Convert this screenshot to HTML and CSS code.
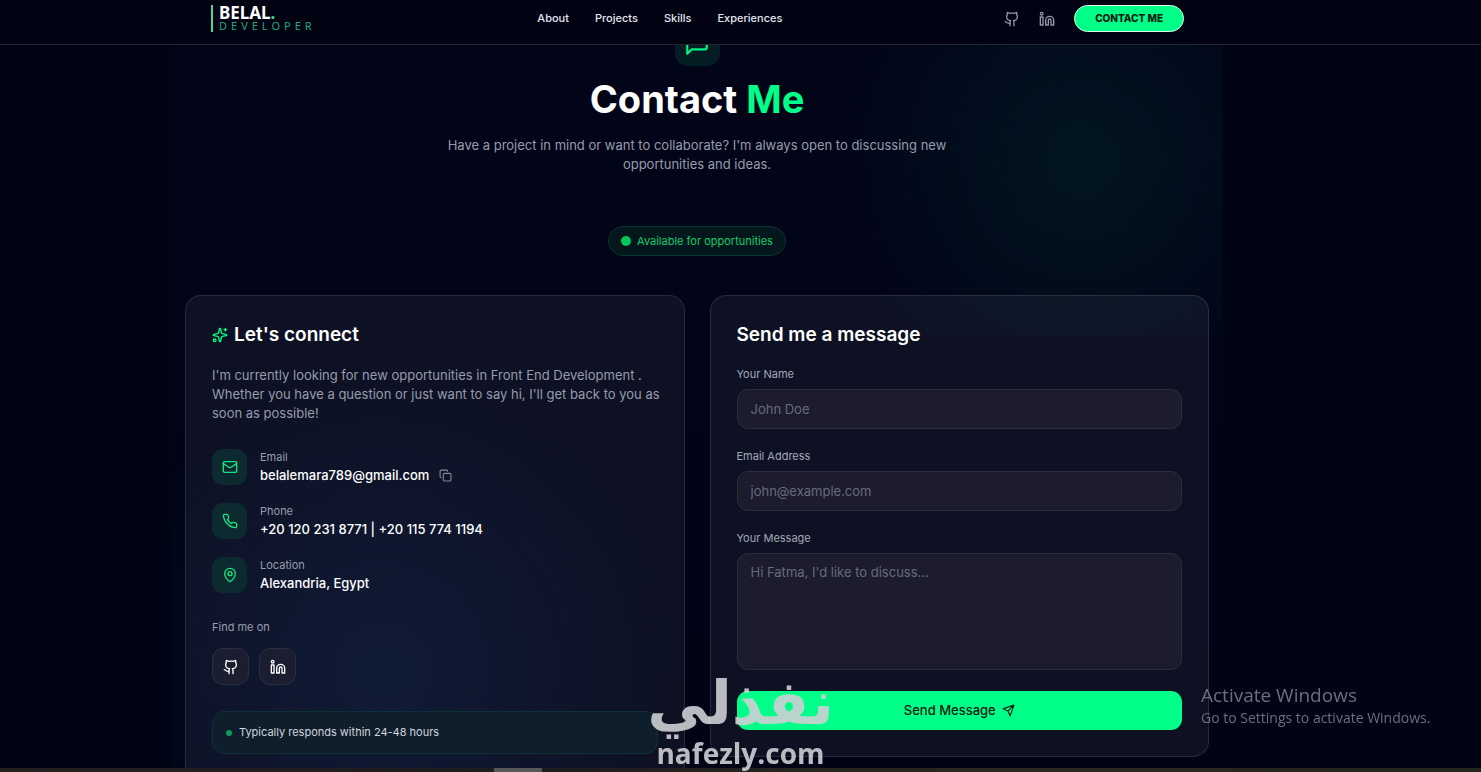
FILE: index.html
```
<!DOCTYPE html>
<html lang="en">
<head>
<meta charset="utf-8">
<meta name="viewport" content="width=device-width, initial-scale=1">
<title>Belal. Developer</title>
<link rel="stylesheet" href="styles.css">
</head>
<body>
<svg class="sprite" aria-hidden="true">
  <symbol id="github" viewBox="0 0 24 24"><path d="M15 22v-4a4.8 4.8 0 0 0-1-3.500c3 0 6-2 6-5.500.08-1.250-.27-2.480-1-3.500.28-1.150.28-2.350 0-3.500 0 0-1 0-3 1.500-2.640-.5-5.360-.5-8 0C6 2 5 2 5 2c-.3 1.150-.3 2.350 0 3.500A5.403 5.403 0 0 0 4 9c0 3.500 3 5.500 6 5.500-.39.49-.68 1.050-.85 1.650-.17.6-.22 1.230-.15 1.850v4"/><path d="M9 18c-4.510 2-5-2-7-2"/></symbol>
  <symbol id="linkedin" viewBox="0 0 24 24"><path d="M16 8a6 6 0 0 1 6 6v7h-4v-7a2 2 0 0 0-4 0v7h-4v-7a6 6 0 0 1 6-6z"/><rect x="2" y="9" width="4" height="12"/><circle cx="4" cy="4" r="2"/></symbol>
  <symbol id="message" viewBox="0 0 24 24"><path d="M21 15a2 2 0 0 1-2 2H7l-4 4V5a2 2 0 0 1 2-2h14a2 2 0 0 1 2 2z"/></symbol>
  <symbol id="sparkles" viewBox="0 0 24 24"><path d="M11.017 2.814a1 1 0 0 1 1.966 0l1.051 5.558a2 2 0 0 0 1.594 1.594l5.558 1.051a1 1 0 0 1 0 1.966l-5.558 1.051a2 2 0 0 0-1.594 1.594l-1.051 5.558a1 1 0 0 1-1.966 0l-1.051-5.558a2 2 0 0 0-1.594-1.594l-5.558-1.051a1 1 0 0 1 0-1.966l5.558-1.051a2 2 0 0 0 1.594-1.594z"/><path d="M20 2v4M22 4h-4"/><circle cx="4" cy="20" r="2"/></symbol>
  <symbol id="mail" viewBox="0 0 24 24"><path d="m22 7-8.991 5.727a2 2 0 0 1-2.009 0L2 7"/><rect x="2" y="4" width="20" height="16" rx="2"/></symbol>
  <symbol id="phone" viewBox="0 0 24 24"><path d="M22 16.920v3a2 2 0 0 1-2.180 2 19.790 19.790 0 0 1-8.630-3.070 19.500 19.500 0 0 1-6-6 19.790 19.790 0 0 1-3.070-8.670A2 2 0 0 1 4.110 2h3a2 2 0 0 1 2 1.720 12.840 12.840 0 0 0 .7 2.810 2 2 0 0 1-.45 2.110L8.090 9.910a16 16 0 0 0 6 6l1.270-1.270a2 2 0 0 1 2.110-.45 12.840 12.840 0 0 0 2.810.7A2 2 0 0 1 22 16.920z"/></symbol>
  <symbol id="pin" viewBox="0 0 24 24"><path d="M20 10c0 4.993-5.539 10.193-7.399 11.799a1 1 0 0 1-1.202 0C9.539 20.193 4 14.993 4 10a8 8 0 0 1 16 0"/><circle cx="12" cy="10" r="3"/></symbol>
  <symbol id="copy" viewBox="0 0 24 24"><rect x="8" y="8" width="14" height="14" rx="2"/><path d="M4 16c-1.100 0-2-.9-2-2V4c0-1.100.9-2 2-2h10c1.100 0 2 .9 2 2"/></symbol>
  <symbol id="send" viewBox="0 0 24 24"><path d="M22 2 15 22l-4-9-9-4zM22 2 11 13"/></symbol>
</svg>

<header class="header">
  <div class="header-inner">
    <a class="logo" href="#"><span class="logo-name">BELAL<span class="logo-dot">.</span></span><span class="logo-role">DEVELOPER</span></a>
    <nav class="nav">
      <a href="#about">About</a>
      <a href="#projects">Projects</a>
      <a href="#skills">Skills</a>
      <a href="#experiences">Experiences</a>
    </nav>
    <div class="header-actions">
      <a class="header-icon" href="#" aria-label="GitHub"><svg class="icon icon-md"><use href="#github"/></svg></a>
      <a class="header-icon" href="#" aria-label="LinkedIn"><svg class="icon icon-md"><use href="#linkedin"/></svg></a>
      <a class="contact-button" href="#contact">CONTACT ME</a>
    </div>
  </div>
</header>

<main class="page">
  <section class="contact" id="contact">
    <div class="intro">
      <div class="intro-icon"><svg class="icon icon-lg"><use href="#message"/></svg></div>
      <h1 class="title">Contact <span class="accent">Me</span></h1>
      <p class="subtitle">Have a project in mind or want to collaborate? I'm always open to discussing new opportunities and ideas.</p>
      <div class="availability"><span class="availability-dot"></span>Available for opportunities</div>
    </div>

    <div class="cards">
      <div class="card">
        <h2 class="card-title"><svg class="icon icon-md accent"><use href="#sparkles"/></svg>Let's connect</h2>
        <p class="card-text">I'm currently looking for new opportunities in Front End Development . Whether you have a question or just want to say hi, I'll get back to you as soon as possible!</p>
        <ul class="details">
          <li class="detail">
            <span class="detail-icon"><svg class="icon icon-md"><use href="#mail"/></svg></span>
            <div><div class="detail-label">Email</div><div class="detail-value"><a href="mailto:belalemara789@gmail.com">belalemara789@gmail.com</a><button class="copy" type="button" aria-label="Copy email"><svg class="icon icon-sm"><use href="#copy"/></svg></button></div></div>
          </li>
          <li class="detail">
            <span class="detail-icon"><svg class="icon icon-md"><use href="#phone"/></svg></span>
            <div><div class="detail-label">Phone</div><div class="detail-value">+20 120 231 8771 | +20 115 774 1194</div></div>
          </li>
          <li class="detail">
            <span class="detail-icon"><svg class="icon icon-md"><use href="#pin"/></svg></span>
            <div><div class="detail-label">Location</div><div class="detail-value">Alexandria, Egypt</div></div>
          </li>
        </ul>
        <p class="find">Find me on</p>
        <div class="socials">
          <a class="social" href="#" aria-label="GitHub"><svg class="icon icon-md"><use href="#github"/></svg></a>
          <a class="social" href="#" aria-label="LinkedIn"><svg class="icon icon-md"><use href="#linkedin"/></svg></a>
        </div>
        <div class="response"><span class="response-dot"></span>Typically responds within 24-48 hours</div>
      </div>

      <form class="card">
        <h2 class="card-title">Send me a message</h2>
        <div class="field"><label for="name">Your Name</label><input id="name" type="text" placeholder="John Doe"></div>
        <div class="field"><label for="email">Email Address</label><input id="email" type="email" placeholder="john@example.com"></div>
        <div class="field"><label for="message-text">Your Message</label><textarea id="message-text" placeholder="Hi Fatma, I'd like to discuss..."></textarea></div>
        <button class="submit" type="button">Send Message<svg class="icon icon-sm"><use href="#send"/></svg></button>
      </form>
    </div>
  </section>
</main>

<div class="watermark"><span class="watermark-ar" lang="ar" dir="rtl">نفذلي</span><span class="watermark-url">nafezly.com</span></div>
<div class="activate"><div class="activate-title">Activate Windows</div><div>Go to Settings to activate Windows.</div></div>
<div class="taskbar"><span class="taskbar-item"></span></div>
</body>
</html>
```
FILE: styles.css
```
* { box-sizing: border-box; }

body {
  margin: 0;
  height: 100vh;
  overflow: hidden;
  background: #010414;
  color: #fff;
  font-family: Inter, "Liberation Sans", sans-serif;
  font-size: 13px;
  line-height: 19px;
}

a { color: inherit; text-decoration: none; }
h1, h2, p, ul { margin: 0; padding: 0; }
button, input, textarea { font: inherit; color: inherit; }

.sprite { display: none; }
.icon { display: block; flex: none; fill: none; stroke: currentColor; stroke-width: 2; stroke-linecap: round; stroke-linejoin: round; }
.icon-sm { width: 13px; height: 13px; }
.icon-md { width: 16px; height: 16px; }
.icon-lg { width: 26px; height: 26px; }
.accent { color: #00ff88; }

/* Header */
.header {
  position: fixed;
  inset: 0 0 auto;
  z-index: 2;
  padding-right: 86px;
  background: #010313;
  border-bottom: 1px solid #232632;
}
.header-inner {
  display: flex;
  align-items: center;
  justify-content: space-between;
  max-width: 973px;
  margin: 0 auto;
  padding: 5px 0 12px;
}
.logo {
  display: flex;
  flex-direction: column;
  padding-left: 6px;
  border-left: 2px solid #4fd39a;
  font-family: "Noto Sans", sans-serif;
}
.logo-name { font-size: 17px; font-weight: 700; line-height: 15px; }
.logo-dot { color: #34d399; }
.logo-role { color: #22a777; font-size: 11px; line-height: 12px; letter-spacing: 4px; }
.nav { display: flex; gap: 26px; color: #e2e5ee; font-size: 11px; font-weight: 500; }
.header-actions { display: flex; align-items: center; gap: 19px; }
.header-icon { color: #9298a8; }
.contact-button {
  padding: 3px 20px;
  border: 1px solid #d5ffe9;
  border-radius: 14px;
  background: #00ff88;
  color: #021a10;
  font-size: 10px;
  font-weight: 800;
}

/* Contact section */
.page { padding-right: 87px; }
.contact {
  max-width: 1050px;
  margin: 0 auto;
  padding: 21px 13px;
  background:
    radial-gradient(circle at 910px 160px, rgba(0, 130, 90, 0.14), rgba(0, 130, 90, 0) 250px) 0 0 / 100% 336px no-repeat,
    radial-gradient(circle at 210px 670px, rgba(16, 60, 140, 0.18), rgba(16, 60, 140, 0) 290px),
    linear-gradient(#020418, #010415);
}
.intro { display: flex; flex-direction: column; align-items: center; text-align: center; }
.intro-icon {
  display: grid;
  place-items: center;
  width: 45px;
  height: 45px;
  border-radius: 13px;
  background: #031d22;
  color: #00f285;
}
.title { margin-top: 8px; font-size: 38px; font-weight: 700; line-height: 50px; }
.subtitle { max-width: 500px; margin-top: 12px; color: #969cab; }
.availability {
  display: flex;
  align-items: center;
  gap: 6px;
  margin-top: 52px;
  padding: 5px 12px;
  height: 30px;
  border: 1px solid #07362f;
  border-radius: 15px;
  background: #04171d;
  color: #16ca6c;
  font-size: 11px;
}
.availability-dot { width: 10px; height: 10px; border-radius: 50%; background: #00c957; }

.cards { display: grid; grid-template-columns: 1fr 1fr; gap: 25px; align-items: start; margin-top: 39px; }
.card {
  padding: 26px;
  border: 1px solid rgba(255, 255, 255, 0.11);
  border-radius: 16px;
  background: rgba(226, 235, 255, 0.06);
}
.card-title { display: flex; align-items: center; gap: 6px; margin-bottom: 19px; font-size: 19px; font-weight: 600; line-height: 25px; }
.card-text { margin-right: -8px; color: #969cab; }

.details { display: flex; flex-direction: column; gap: 18px; margin-top: 26px; list-style: none; }
.detail { display: flex; align-items: center; gap: 13px; }
.detail-icon {
  display: grid;
  place-items: center;
  width: 35px;
  height: 36px;
  border-radius: 11px;
  background: #0e2a31;
  color: #12e781;
}
.detail-label { color: #969cab; font-size: 11px; line-height: 17px; }
.detail-value { display: flex; align-items: center; gap: 10px; font-weight: 500; }
.copy { padding: 0; border: 0; background: none; color: #858b99; }
.find { margin-top: 25px; color: #969cab; font-size: 11px; }
.socials { display: flex; gap: 10px; margin-top: 11px; }
.social {
  display: grid;
  place-items: center;
  width: 37px;
  height: 37px;
  border: 1px solid #2b2f40;
  border-radius: 11px;
  background: #1a1e30;
}
.response {
  display: flex;
  align-items: center;
  gap: 7px;
  margin-top: 26px;
  padding: 11px 13px;
  border: 1px solid #103036;
  border-radius: 12px;
  background: #0e1e2a;
  color: #d0d5dd;
  font-size: 11px;
}
.response-dot { width: 6px; height: 6px; border-radius: 50%; background: #0d9b5c; }

/* Form */
.field { display: flex; flex-direction: column; gap: 7px; margin-bottom: 19px; }
.field label { color: #a3a8b6; font-size: 11px; line-height: 16px; }
.field input, .field textarea {
  width: 100%;
  height: 40px;
  padding: 9px 13px;
  border: 1px solid #2d2e3c;
  border-radius: 11px;
  background: #1c1c2c;
  outline: 0;
}
.field textarea { display: block; height: 117px; resize: none; }
.field ::placeholder { color: #676b7a; opacity: 1; }
.submit {
  display: flex;
  align-items: center;
  justify-content: center;
  gap: 6px;
  width: 100%;
  height: 39px;
  margin-top: 21px;
  padding: 0;
  border: 0;
  border-radius: 11px;
  background: #00ff88;
  color: #021a10;
  font-weight: 500;
}
.field:has(+ .submit) { margin-bottom: 0; }

/* Overlays */
.watermark {
  position: fixed;
  bottom: 0;
  left: 651px;
  z-index: 3;
  display: flex;
  flex-direction: column;
  align-items: center;
  width: 179px;
  color: rgba(205, 207, 212, 0.9);
  font-weight: 700;
  pointer-events: none;
}
.watermark-ar { font-family: "DejaVu Sans", sans-serif; font-size: 61px; line-height: 62px; }
.watermark-url { font-family: "Open Sans", sans-serif; font-size: 28px; line-height: 38px; }
.activate {
  position: fixed;
  right: 44px;
  bottom: 44px;
  z-index: 3;
  width: 236px;
  color: #6c6f7b;
  font-family: "Open Sans", "Noto Sans", sans-serif;
  font-size: 14px;
  line-height: 20px;
  pointer-events: none;
}
.activate-title { font-size: 19px; line-height: 25px; }
.taskbar {
  position: fixed;
  inset: auto 0 0;
  z-index: 2;
  height: 4px;
  background: linear-gradient(90deg, #24211f, #1d1c1d 35%, #2a2a20 70%, #23241d);
}
.taskbar-item { display: block; width: 48px; height: 4px; margin-left: 494px; background: #57565b; }
```
